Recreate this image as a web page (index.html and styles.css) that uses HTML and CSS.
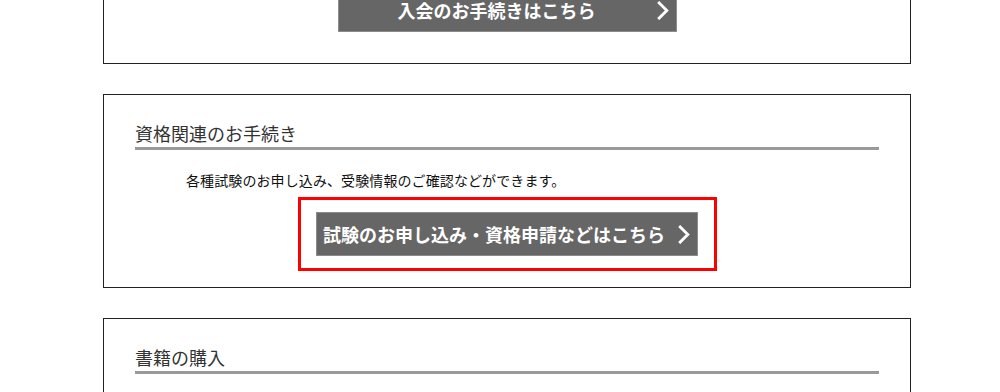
FILE: index.html
```html
<!DOCTYPE html>
<html lang="ja">
<head>
<meta charset="utf-8">
<title>お手続き</title>
<link rel="stylesheet" href="styles.css">
</head>
<body>
<div class="page">
  <section class="box box-first">
    <div class="btn-row">
      <a class="btn btn-wide" href="#">入会のお手続きはこちら<svg class="chev" viewBox="0 0 12 20" aria-hidden="true"><path d="M2 2 L10 10 L2 18" /></svg></a>
    </div>
  </section>

  <section class="box">
    <h2 class="box-title">資格関連のお手続き</h2>
    <p class="box-text">各種試験のお申し込み、受験情報のご確認などができます。</p>
    <div class="btn-row">
      <a class="btn btn-marked" href="#">試験のお申し込み・資格申請などはこちら<svg class="chev" viewBox="0 0 12 20" aria-hidden="true"><path d="M2 2 L10 10 L2 18" /></svg></a>
    </div>
  </section>

  <section class="box">
    <h2 class="box-title">書籍の購入</h2>
    <p class="box-text">&nbsp;</p>
  </section>
</div>
</body>
</html>
```

FILE: styles.css
```css
html, body {
  margin: 0;
  padding: 0;
  background: #fff;
}

body {
  font-family: "Noto Sans CJK JP", "Noto Sans", sans-serif;
  color: #222;
  overflow: hidden;
}

.page {
  width: 808px;
  margin: -43px 0 0 103px;
  display: flex;
  flex-direction: column;
  gap: 30px;
}

.box {
  border: 1px solid #222;
  padding: 25px 31px 31px;
}

.box-first {
  padding: 30px 31px 31px;
}

.box-title {
  margin: 0;
  font-size: 18px;
  line-height: 27px;
  font-weight: normal;
  color: #333;
  border-bottom: 3px solid #999;
  letter-spacing: 0;
}

.box-text {
  margin: 19px 0 0;
  padding-left: 51px;
  font-size: 14px;
  line-height: 22px;
  color: #111;
  letter-spacing: 0.1px;
}

.btn-row {
  text-align: center;
  margin-top: 21px;
}

.box-first .btn-row {
  margin-top: 0;
}

.btn {
  position: relative;
  display: inline-block;
  box-sizing: border-box;
  height: 44px;
  padding: 0 32px 0 6px;
  background: #666;
  border: 1px solid #8c8c8c;
  color: #fff;
  font-size: 18px;
  font-weight: bold;
  line-height: 42px;
  text-decoration: none;
  text-align: center;
}

.btn-wide {
  min-width: 339px;
  padding-right: 27px;
}

.chev {
  position: absolute;
  right: 7px;
  top: 12px;
  width: 12px;
  height: 19px;
}

.chev path {
  fill: none;
  stroke: #fff;
  stroke-width: 3;
  stroke-linecap: square;
  stroke-linejoin: miter;
}

.btn-marked::after {
  content: "";
  position: absolute;
  top: -16px;
  bottom: -16px;
  left: -19px;
  right: -20px;
  border: 3px solid #f00;
  pointer-events: none;
}
```
